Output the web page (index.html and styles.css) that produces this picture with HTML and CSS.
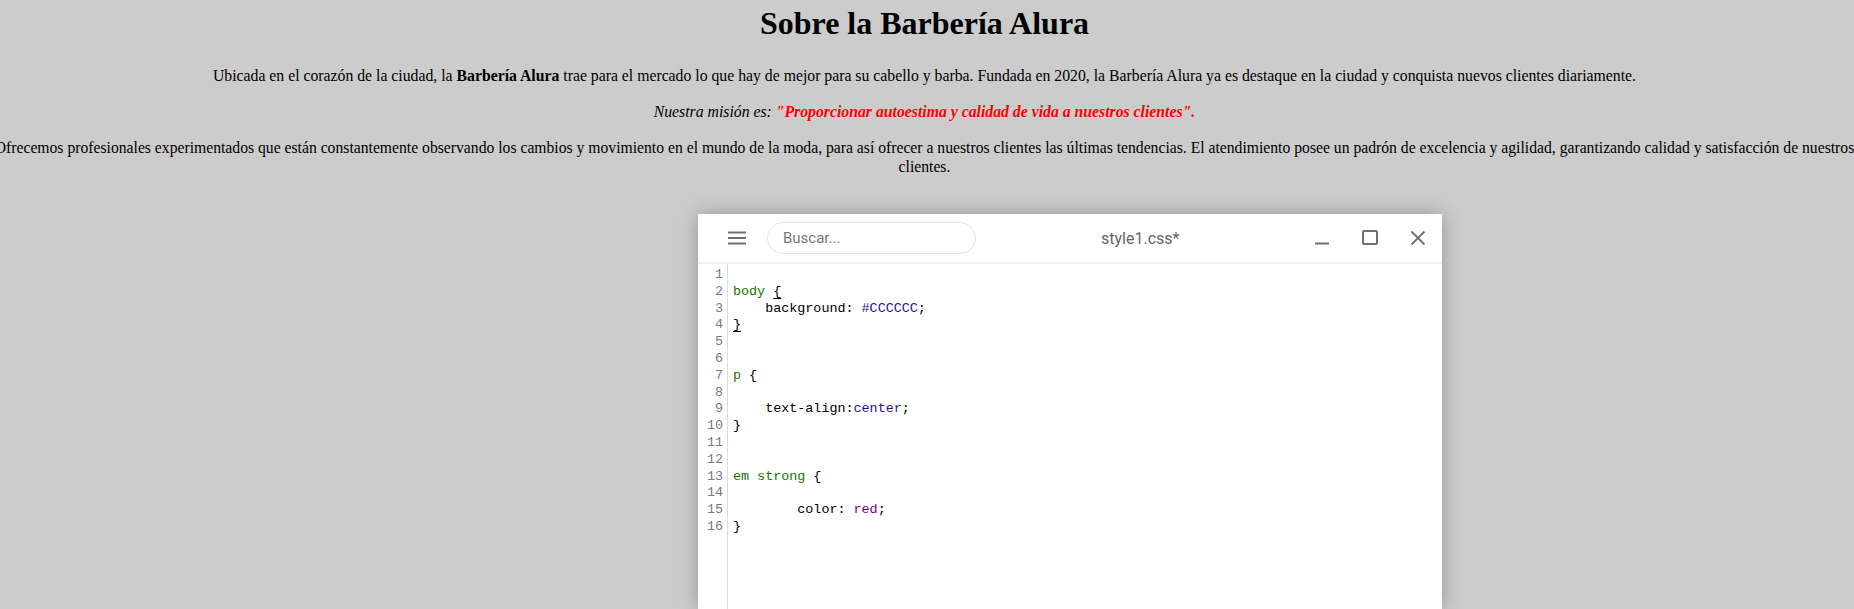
FILE: index.html
```html
<!DOCTYPE html>
<html lang="es">
<head>
<meta charset="utf-8">
<title>Sobre la Barbería Alura</title>
<link rel="stylesheet" href="styles.css">
</head>
<body>
<main class="page">
  <h1 class="title">Sobre la Barbería Alura</h1>
  <p class="text">Ubicada en el corazón de la ciudad, la <strong>Barbería Alura</strong> trae para el mercado lo que hay de mejor para su cabello y barba. Fundada en 2020, la Barbería Alura ya es destaque en la ciudad y conquista nuevos clientes diariamente.</p>
  <p class="text text-mission"><em>Nuestra misión es: <strong class="mission">"Proporcionar autoestima y calidad de vida a nuestros clientes".</strong></em></p>
  <p class="text text-wide">Ofrecemos profesionales experimentados que están constantemente observando los cambios y movimiento en el mundo de la moda, para así ofrecer a nuestros clientes las últimas tendencias. El atendimiento posee un padrón de excelencia y agilidad, garantizando calidad y satisfacción de nuestros clientes.</p>
</main>

<section class="editor">
  <header class="editor-bar">
    <button class="icon-btn" type="button" aria-label="Menú">
      <svg width="48" height="48" viewBox="0 0 48 48"><rect x="15" y="17.5" width="18" height="2" fill="#6f6f6f"/><rect x="15" y="23" width="18" height="2" fill="#6f6f6f"/><rect x="15" y="28.5" width="18" height="2" fill="#6f6f6f"/></svg>
    </button>
    <input class="search" type="text" placeholder="Buscar...">
    <span class="file-name">style1.css*</span>
    <div class="controls">
      <button class="icon-btn" type="button" aria-label="Minimizar">
        <svg width="48" height="48" viewBox="0 0 48 48"><rect x="17" y="28.5" width="14" height="2" fill="#6f6f6f"/></svg>
      </button>
      <button class="icon-btn" type="button" aria-label="Maximizar">
        <svg width="48" height="48" viewBox="0 0 48 48"><rect x="17" y="17" width="14" height="13" rx="1" fill="none" stroke="#6f6f6f" stroke-width="2"/></svg>
      </button>
      <button class="icon-btn" type="button" aria-label="Cerrar">
        <svg width="48" height="48" viewBox="0 0 48 48"><path d="M17.5 17.5 L30.5 30.5 M30.5 17.5 L17.5 30.5" stroke="#6f6f6f" stroke-width="1.8" fill="none"/></svg>
      </button>
    </div>
  </header>
  <div class="code">
    <div class="gutter">
      <div>1</div><div>2</div><div>3</div><div>4</div><div>5</div><div>6</div><div>7</div><div>8</div><div>9</div><div>10</div><div>11</div><div>12</div><div>13</div><div>14</div><div>15</div><div>16</div>
    </div>
    <div class="lines">
      <div class="line"> </div>
      <div class="line"><span class="tag">body</span> <span class="match">{</span></div>
      <div class="line">    background: <span class="atom">#CCCCCC</span>;</div>
      <div class="line"><span class="match">}</span></div>
      <div class="line"> </div>
      <div class="line"> </div>
      <div class="line"><span class="tag">p</span> {</div>
      <div class="line"> </div>
      <div class="line">    text-align:<span class="atom">center</span>;</div>
      <div class="line">}</div>
      <div class="line"> </div>
      <div class="line"> </div>
      <div class="line"><span class="tag">em strong</span> {</div>
      <div class="line"> </div>
      <div class="line">        color: <span class="kw">red</span>;</div>
      <div class="line">}</div>
    </div>
  </div>
</section>
</body>
</html>
```

FILE: styles.css
```css
html {
  overflow: hidden;
}

body {
  margin: 0;
  background: #CCCCCC;
  font-family: "Liberation Serif", "Times New Roman", serif;
  font-size: 16px;
  color: #000;
}

.page {
  margin-right: 5px;
}

.title {
  font-size: 32px;
  margin: 4px 0 22.5px;
  text-align: center;
  line-height: 39px;
}

.text {
  text-align: center;
  margin: 16px 0;
  font-size: 15.75px;
  line-height: 19.5px;
}

.text-mission {
  padding-top: 1px;
  margin-bottom: 15px;
}

.text-wide {
  margin-left: -25px;
  margin-right: -25px;
  font-size: 15.68px;
}

.mission {
  color: red;
}

/* editor window */
.editor {
  position: absolute;
  left: 698px;
  top: 214px;
  width: 744px;
  height: 395px;
  background: #fff;
  box-shadow: 0 0 18px rgba(0, 0, 0, 0.28);
  display: flex;
  flex-direction: column;
}

.editor-bar {
  height: 48px;
  border-bottom: 2px solid #f1f1f1;
  display: flex;
  align-items: center;
  padding-left: 15px;
  font-family: Roboto, "Liberation Sans", sans-serif;
}

.icon-btn {
  width: 48px;
  height: 48px;
  padding: 0;
  border: 0;
  background: none;
  display: block;
}

.icon-btn svg {
  display: block;
}

.search {
  box-sizing: border-box;
  width: 209px;
  height: 32px;
  margin-left: 6px;
  border: 1px solid #e4e4e4;
  border-radius: 16px;
  padding: 0 0 0 15px;
  font-family: Roboto, "Liberation Sans", sans-serif;
  font-size: 15px;
  color: #333;
  outline: none;
}

.search::placeholder {
  color: #767676;
}

.file-name {
  margin-left: 125px;
  font-size: 16px;
  color: #666;
}

.controls {
  margin-left: auto;
  display: flex;
}

.code {
  flex: 1;
  display: flex;
  font-family: "Liberation Mono", "Courier New", monospace;
  font-size: 13.4px;
  line-height: 16.8px;
}

.gutter {
  width: 25px;
  padding: 3px 4px 0 0;
  border-right: 1px solid #dddddd;
  text-align: right;
  color: #7a7a7a;
}

.lines {
  padding: 3px 0 0 5px;
  color: #000;
}

.line {
  white-space: pre;
  height: 16.8px;
}

.tag {
  color: #117700;
}

.atom {
  color: #221199;
}

.kw {
  color: #770088;
}

.match {
  text-decoration: underline;
  text-underline-offset: 3px;
}
```
